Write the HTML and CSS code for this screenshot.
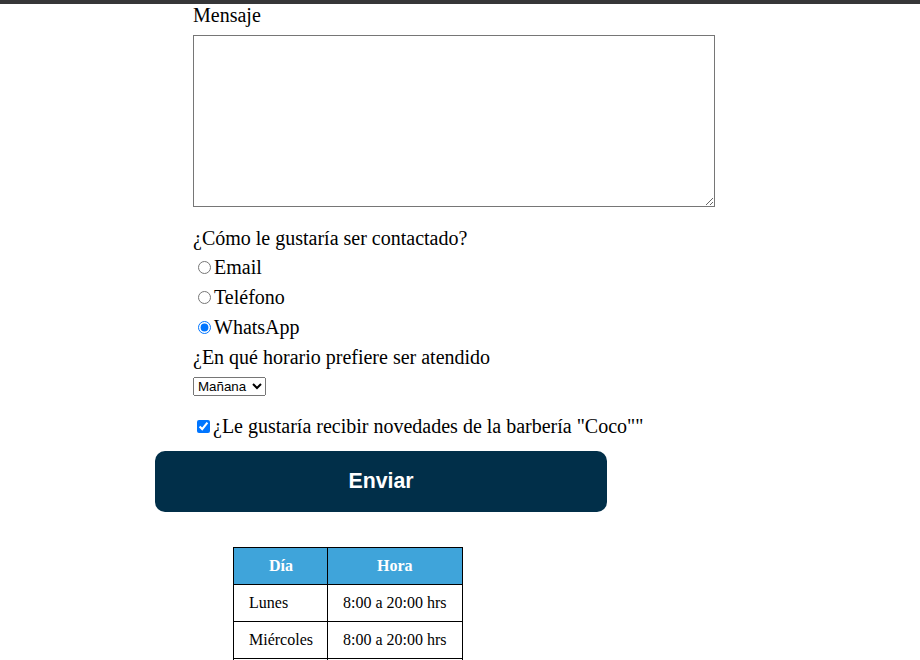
FILE: index.html
```html
<!DOCTYPE html>
<html lang="es">
<head>
<meta charset="utf-8">
<title>Contacto</title>
<link rel="stylesheet" href="styles.css">
</head>
<body>
<div class="topbar"></div>
<main class="wrap">
  <form class="form">
    <div class="fields">
      <label class="label" for="msg">Mensaje</label>
      <textarea id="msg" class="textarea"></textarea>
      <p class="question">¿Cómo le gustaría ser contactado?</p>
      <label class="option"><input type="radio" name="contacto" class="radio">Email</label>
      <label class="option"><input type="radio" name="contacto" class="radio">Teléfono</label>
      <label class="option"><input type="radio" name="contacto" class="radio" checked>WhatsApp</label>
      <p class="question2">¿En qué horario prefiere ser atendido</p>
      <select class="select">
        <option>Mañana</option>
        <option>Tarde</option>
      </select>
      <label class="check-row"><input type="checkbox" class="check" checked>¿Le gustaría recibir novedades de la barbería "Coco""</label>
    </div>
    <button type="button" class="send">Enviar</button>
  </form>
  <table class="hours">
    <thead>
      <tr><th>Día</th><th>Hora</th></tr>
    </thead>
    <tbody>
      <tr><td>Lunes</td><td>8:00 a 20:00 hrs</td></tr>
      <tr><td>Miércoles</td><td>8:00 a 20:00 hrs</td></tr>
      <tr><td>Viernes</td><td>8:00 a 20:00 hrs</td></tr>
    </tbody>
  </table>
</main>
</body>
</html>
```

FILE: styles.css
```css
html, body {
  margin: 0;
  padding: 0;
  background: #ffffff;
}

body {
  font-family: "Liberation Serif", "Times New Roman", serif;
  color: #000;
  font-size: 20px;
}

.topbar {
  height: 4px;
  background: #363638;
}

.wrap {
  margin-left: 155px;
}

.form {
  margin: 0;
}

.fields {
  padding-left: 38px;
}

.label {
  display: block;
  line-height: 22px;
}

.textarea {
  display: block;
  box-sizing: border-box;
  width: 522px;
  height: 172px;
  margin: 9px 0 0 0;
  border: 1px solid #767676;
  font-family: "Liberation Mono", monospace;
  font-size: 13px;
}

.question {
  margin: 18px 0 0 0;
  line-height: 27px;
}

.option {
  display: block;
  line-height: 30px;
}

.radio {
  margin: 3px 3px 0 5px;
}

.question2 {
  margin: 0;
  line-height: 30px;
}

.select {
  display: block;
  width: 73px;
  margin-top: 5px;
  font-family: "Liberation Sans", Arial, sans-serif;
  font-size: 13.33px;
}

.check-row {
  display: block;
  margin-top: 15px;
  line-height: 30px;
}

.check {
  margin: 3px 3px 3px 4px;
}

.send {
  display: block;
  box-sizing: border-box;
  width: 452px;
  height: 61px;
  margin-top: 10px;
  border: none;
  border-radius: 10px;
  background: #012f49;
  color: #ffffff;
  font-family: "Liberation Sans", Arial, sans-serif;
  font-weight: bold;
  font-size: 21.3px;
}

.hours {
  margin: 35px 0 0 78px;
  border-collapse: collapse;
  font-size: 16px;
}

.hours th,
.hours td {
  border: 1px solid #000;
  padding: 9px 14px 9px 15px;
  line-height: 18px;
}

.hours th:last-child,
.hours td:last-child {
  padding-right: 15px;
}

.hours th {
  background: #3fa4da;
  color: #ffffff;
  font-weight: bold;
  text-align: center;
}

.hours td {
  text-align: left;
}
```
